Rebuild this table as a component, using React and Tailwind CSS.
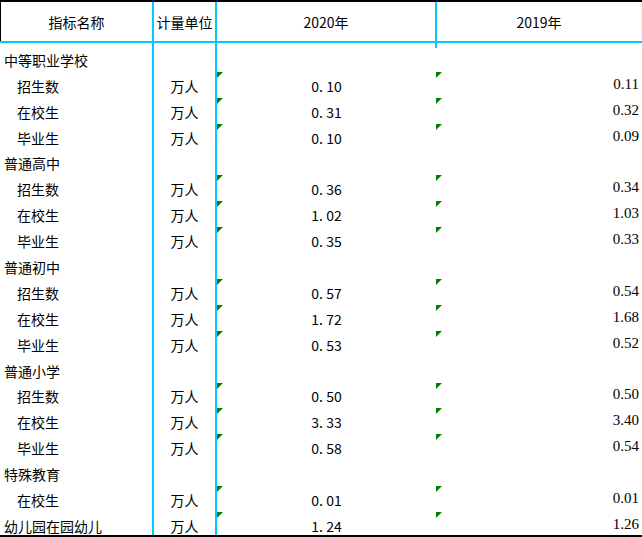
import React from 'react';

const rows = [
  { label: '中等职业学校', section: true },
  { label: '招生数', a: '0. 10', b: '0.11' },
  { label: '在校生', a: '0. 31', b: '0.32' },
  { label: '毕业生', a: '0. 10', b: '0.09' },
  { label: '普通高中', section: true },
  { label: '招生数', a: '0. 36', b: '0.34' },
  { label: '在校生', a: '1. 02', b: '1.03' },
  { label: '毕业生', a: '0. 35', b: '0.33' },
  { label: '普通初中', section: true },
  { label: '招生数', a: '0. 57', b: '0.54' },
  { label: '在校生', a: '1. 72', b: '1.68' },
  { label: '毕业生', a: '0. 53', b: '0.52' },
  { label: '普通小学', section: true },
  { label: '招生数', a: '0. 50', b: '0.50' },
  { label: '在校生', a: '3. 33', b: '3.40' },
  { label: '毕业生', a: '0. 58', b: '0.54' },
  { label: '特殊教育', section: true },
  { label: '在校生', a: '0. 01', b: '0.01' },
  { label: '幼儿园在园幼儿', a: '1. 24', b: '1.26', flat: true },
];

// little green "number stored as text" marker
const Flag = () => (
  <span className="absolute top-[3px] left-0 w-0 h-0 border-t-[6px] border-t-[#007f00] border-r-[6px] border-r-transparent" />
);

export default function App() {
  return (
    <div
      className="w-[642px] h-[537px] bg-white text-black text-[14px] leading-[18px] relative overflow-hidden"
      style={{ fontFamily: '"Noto Sans CJK SC", "Noto Sans", sans-serif' }}
    >
      {/* header */}
      <div className="flex h-[43px] border-t-2 border-t-black border-b-2 border-b-[#00ccff]">
        <div className="w-[154px] shrink-0 border-l border-l-black border-r-2 border-r-[#00ccff] flex items-center justify-center">
          指标名称
        </div>
        <div className="w-[63px] shrink-0 border-r-2 border-r-[#00ccff] flex items-center justify-center">
          计量单位
        </div>
        <div className="w-[220px] shrink-0 border-r-2 border-r-[#00ccff] flex items-center justify-center">
          2020年
        </div>
        <div className="w-[205px] shrink-0 border-r border-r-[#ffff99] flex items-center justify-center">
          2019年
        </div>
      </div>
      <div className="absolute left-[435px] top-[43px] w-[2px] h-[5px] bg-[#00ccff]" />

      {/* body */}
      <div className="flex flex-col h-[494px] border-b-2 border-b-black">
        {rows.map((r, i) => (
          <div key={i} className="flex h-[25.9px]">
            <div className="w-[154px] shrink-0 border-r-2 border-r-[#00ccff] flex items-end pl-1">
              <span className={r.section || r.flat ? '' : 'pl-[13px]'}>{r.label}</span>
            </div>
            <div className="w-[63px] shrink-0 border-r-2 border-r-[#00ccff] flex items-end justify-center">
              {r.section ? '' : '万人'}
            </div>
            <div className="w-[219px] shrink-0 relative flex items-end justify-center">
              {!r.section && <Flag />}
              {r.a}
            </div>
            <div
              className="flex-1 relative flex items-end justify-end pr-[3px] pb-[2px] text-[15px]"
              style={{ fontFamily: '"Liberation Serif", serif' }}
            >
              {!r.section && <Flag />}
              {r.b}
            </div>
          </div>
        ))}
      </div>
    </div>
  );
}
